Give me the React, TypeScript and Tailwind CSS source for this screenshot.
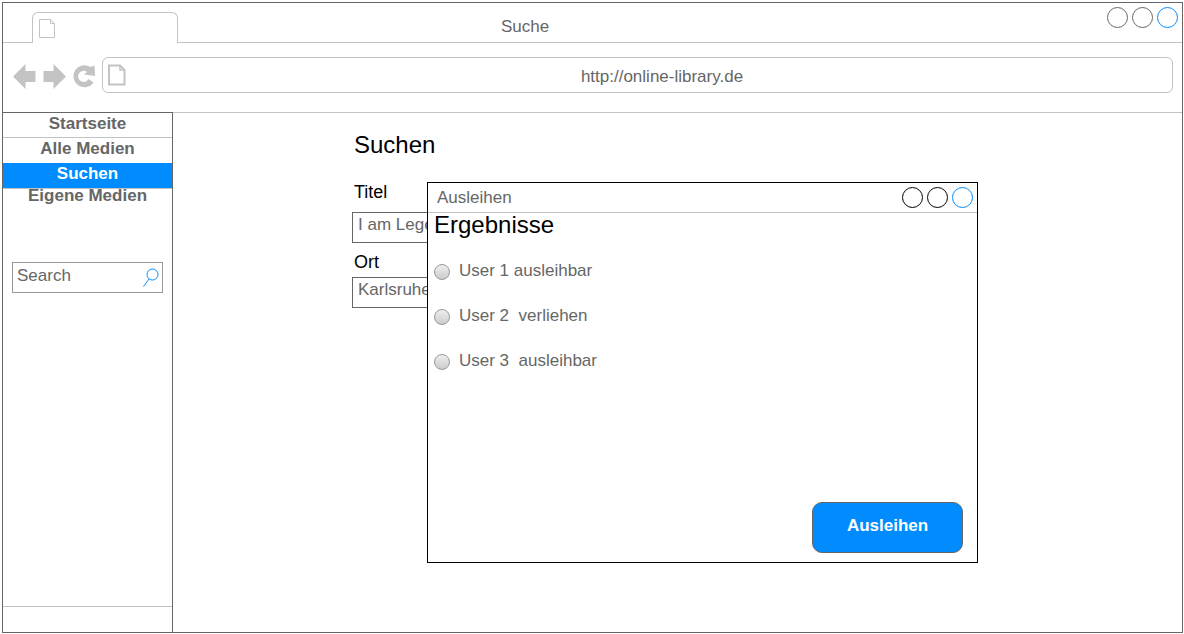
import type { ReactNode } from 'react';

function WindowButtons({ tone }: { tone: string }) {
  return (
    <div className="flex shrink-0 gap-1">
      <button type="button" aria-label="Minimieren" className={`size-[21px] rounded-full border ${tone}`} />
      <button type="button" aria-label="Maximieren" className={`size-[21px] rounded-full border ${tone}`} />
      <button type="button" aria-label="Schließen" className="size-[21px] rounded-full border border-[#008cff]" />
    </div>
  );
}

function ToolButton({ label, children }: { label: string; children: ReactNode }) {
  return (
    <button type="button" aria-label={label} className="shrink-0 text-[#c3c3c3]">
      <svg width="24" height="26" viewBox="0 0 24 26" fill="currentColor">
        {children}
      </svg>
    </button>
  );
}

const navItems = [
  { label: 'Startseite', style: 'h-[25px] border-b border-[#c3c3c3] leading-[22px]' },
  { label: 'Alle Medien', style: 'h-[25px] leading-[22px]' },
  { label: 'Suchen', style: 'h-[26px] border-b border-[#c3c3c3] bg-[#008cff] leading-[22px] text-white' },
  { label: 'Eigene Medien', style: 'h-[25px] leading-[14px]' },
];

const results = ['User 1 ausleihbar', 'User 2  verliehen', 'User 3  ausleihbar'];

export default function App() {
  return (
    <div className="flex min-h-screen bg-white pt-0.5 pr-px pb-px pl-0.5 font-['Liberation_Sans',Arial,sans-serif] text-[17px] leading-5 text-[#666]">
      <div className="flex flex-1 flex-col border border-[#666]">
        <header>
          <div className="flex h-10">
            <div className="w-[29px] shrink-0 border-b border-[#c3c3c3]" />
            <div className="mt-[9px] w-[146px] shrink-0 rounded-t-md border border-b-0 border-[#c3c3c3] pt-1.5 pl-1.5">
              <svg width="17" height="20" viewBox="0 0 17 20" fill="none" stroke="#c3c3c3">
                <path d="M.5.5H11.500L15.500 4.500V18.500H.5ZM11.500.5V4.500H15.500" />
              </svg>
            </div>
            <div className="flex flex-1 items-start justify-between border-b border-[#c3c3c3] pt-1 pr-1 pl-[323px]">
              <h1 className="pt-2.5">Suche</h1>
              <WindowButtons tone="border-[#666]" />
            </div>
          </div>
          <div className="flex h-[69px] items-start pt-3.5 pr-[9px] pl-2.5">
            <div className="flex gap-1.5 pt-[7px] pr-[5px]">
              <ToolButton label="Zurück">
                <path d="M0 12.500 12.500 0V7H22.500V18H12.500V25Z" />
              </ToolButton>
              <ToolButton label="Vorwärts">
                <path d="M23 12.500 10.500 0V7H.5V18H10.500V25Z" />
              </ToolButton>
              <ToolButton label="Neu laden">
                <path d="M20.500 18.500A11 11 0 1 1 17.500 3L21.500 1.500 22 12 11 10.500 14 8A5.500 5.500 0 1 0 15.500 15Z" />
              </ToolButton>
            </div>
            <div className="flex h-9 flex-1 items-center rounded-md border border-[#c3c3c3] pl-[5px]">
              <svg width="18" height="22" viewBox="0 0 18 22" fill="none" stroke="#c3c3c3" className="shrink-0">
                <path strokeWidth="2" d="M1 1.500H12L16.500 6V20.500H1Z" />
                <path d="M12 1.500V6H16.500" strokeWidth="1.500" />
              </svg>
              <input
                aria-label="Adresse"
                defaultValue="http://online-library.de"
                className="ml-[26px] min-w-0 flex-1 bg-transparent pt-[3px] text-center outline-none"
              />
            </div>
          </div>
        </header>

        <div className="flex flex-1">
          <aside className="flex w-[170px] shrink-0 flex-col border-t border-r border-[#666]">
            <nav className="flex flex-col text-center font-bold">
              {navItems.map((item) => (
                <a key={item.label} href="#" className={item.style}>
                  {item.label}
                </a>
              ))}
            </nav>
            <div className="mx-[9px] mt-12 flex h-[31px] justify-between border border-[#999] pt-[3px] pr-0.5 pl-1">
              <input
                type="text"
                aria-label="Search"
                placeholder="Search"
                className="h-5 w-24 bg-transparent outline-none placeholder:text-[#666] placeholder:opacity-100"
              />
              <svg width="18" height="22" viewBox="0 0 18 22" fill="none" stroke="#008cff" className="shrink-0">
                <circle cx="10.500" cy="8.500" r="5.500" />
                <path d="M7 13 1.500 20.500" />
              </svg>
            </div>
            <div className="mt-auto h-[26px] border-t border-[#c3c3c3]" />
          </aside>

          <main className="relative flex-1 border-t border-[#c3c3c3] pt-4 pl-[179px]">
            <h2 className="pl-0.5 text-2xl text-black">Suchen</h2>
            <form className="flex w-60 flex-col pt-[21px]">
              <label htmlFor="titel" className="pl-0.5 text-lg leading-5 text-black">
                Titel
              </label>
              <input id="titel" defaultValue="I am Legend" className="mt-2.5 h-[31px] border border-[#666] pb-1.5 pl-[5px]" />
              <label htmlFor="ort" className="mt-[9px] pl-0.5 text-lg leading-5 text-black">
                Ort
              </label>
              <input id="ort" defaultValue="Karlsruhe" className="mt-[5px] h-[31px] border border-[#666] pb-1.5 pl-[5px]" />
            </form>

            <section
              role="dialog"
              aria-labelledby="dialog-title"
              className="absolute top-[69px] left-[254px] flex h-[381px] w-[551px] flex-col border border-black bg-white"
            >
              <div className="flex h-[30px] shrink-0 items-start justify-between border-b border-[#c3c3c3] pt-1 pr-1 pl-[9px]">
                <h2 id="dialog-title" className="leading-[22px]">
                  Ausleihen
                </h2>
                <WindowButtons tone="border-black" />
              </div>
              <h3 className="pl-1.5 text-2xl leading-6 text-black">Ergebnisse</h3>
              <div className="flex flex-col gap-[23px] pt-[23px] pl-1.5">
                {results.map((result) => (
                  <label key={result} className="flex h-[22px] gap-[9px] leading-[22px] whitespace-pre">
                    <input
                      type="radio"
                      name="exemplar"
                      className="mt-1 size-4 appearance-none rounded-full border border-[#999] bg-linear-to-b from-[#eee] to-[#ccc] checked:to-[#008cff]"
                    />
                    {result}
                  </label>
                ))}
              </div>
              <button
                type="button"
                className="mt-auto mr-3.5 mb-[9px] h-[51px] w-[151px] self-end rounded-[10px] border border-[#666] bg-[#008cff] pb-1 font-bold text-white"
              >
                Ausleihen
              </button>
            </section>
          </main>
        </div>
      </div>
    </div>
  );
}
